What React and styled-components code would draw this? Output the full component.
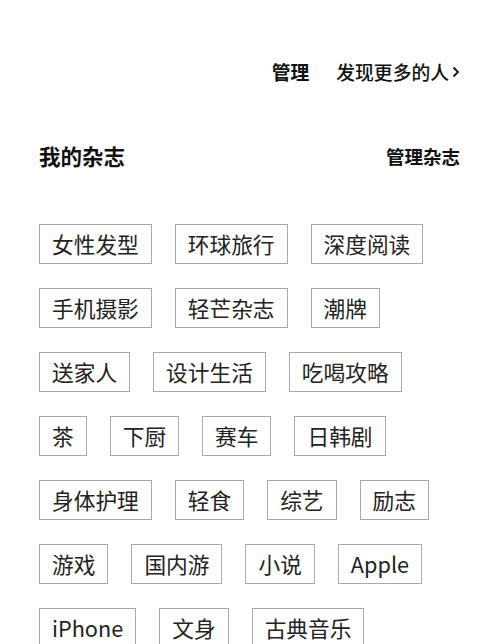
import styled, { createGlobalStyle } from "styled-components";

const GlobalStyle = createGlobalStyle`
  body {
    margin: 0;
    background: #ffffff;
    font-family: "Noto Sans CJK SC", "Noto Sans", sans-serif;
    color: #1a1a1a;
  }
`;

const Page = styled.div`
  width: 500px;
  height: 644px;
  overflow: hidden;
  padding: 58px 39px 0 39px;
  box-sizing: border-box;
`;

const TopBar = styled.div`
  display: flex;
  justify-content: flex-end;
  align-items: center;
  gap: 27px;
  height: 28px;
  padding-right: 1px;
`;

const TopLink = styled.span`
  display: flex;
  align-items: center;
  gap: 3px;
  font-size: 18.8px;
  line-height: 28px;
  font-weight: ${(p) => (p.$strong ? 700 : 500)};
  color: #111;
`;

const TitleRow = styled.div`
  display: flex;
  justify-content: space-between;
  align-items: center;
  margin-top: 55px;
  height: 30px;
  padding-right: 1px;
`;

const Title = styled.h2`
  margin: 0;
  font-size: 21.5px;
  font-weight: 700;
  line-height: 30px;
  color: #111;
`;

const Manage = styled.span`
  font-size: 18.5px;
  font-weight: 700;
  line-height: 30px;
  color: #111;
`;

const TagList = styled.div`
  display: flex;
  flex-direction: column;
  gap: 24px;
  margin-top: 53px;
`;

const TagRow = styled.div`
  display: flex;
  gap: 23px;
`;

const Tag = styled.span`
  display: inline-block;
  height: 40px;
  box-sizing: border-box;
  padding: 0 12px;
  border: 1px solid #a8a8a8;
  font-size: 21.7px;
  line-height: 38px;
  font-weight: 400;
  color: #222;
  white-space: nowrap;
`;

const rows = [
  ["女性发型", "环球旅行", "深度阅读"],
  ["手机摄影", "轻芒杂志", "潮牌"],
  ["送家人", "设计生活", "吃喝攻略"],
  ["茶", "下厨", "赛车", "日韩剧"],
  ["身体护理", "轻食", "综艺", "励志"],
  ["游戏", "国内游", "小说", "Apple"],
  ["iPhone", "文身", "古典音乐"],
];

function Chevron() {
  return (
    <svg width="8" height="12" viewBox="0 0 8 12" fill="none">
      <path d="M1.5 1.5 L6 6 L1.5 10.5" stroke="#111" strokeWidth="1.8" />
    </svg>
  );
}

export default function App() {
  return (
    <>
      <GlobalStyle />
      <Page>
        <TopBar>
          <TopLink $strong>管理</TopLink>
          <TopLink>
            发现更多的人
            <Chevron />
          </TopLink>
        </TopBar>
        <TitleRow>
          <Title>我的杂志</Title>
          <Manage>管理杂志</Manage>
        </TitleRow>
        <TagList>
          {rows.map((row, i) => (
            <TagRow key={i}>
              {row.map((t) => (
                <Tag key={t}>{t}</Tag>
              ))}
            </TagRow>
          ))}
        </TagList>
      </Page>
    </>
  );
}
